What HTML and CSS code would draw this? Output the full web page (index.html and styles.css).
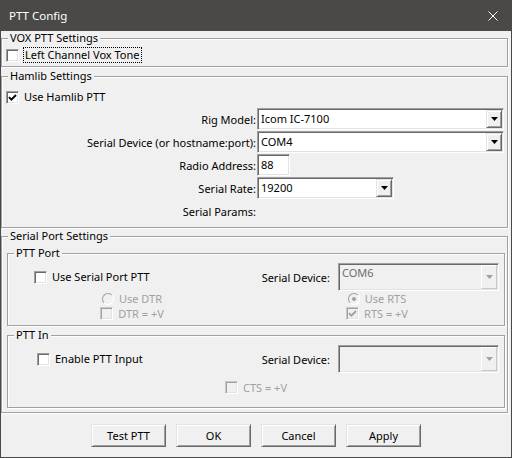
FILE: index.html
```html
<!DOCTYPE html>
<html lang="en">
<head>
    <meta charset="UTF-8">
    <title>PTT Config</title>
    <link rel="stylesheet" href="styles.css">
</head>
<body>
    <div class="window">
        <div class="titlebar">
            <span class="title">PTT Config</span>
            <svg class="close" width="10" height="10" viewBox="0 0 10 10"><path d="M0.5 0.5L9.5 9.5M9.5 0.5L0.5 9.5" stroke="#fff" stroke-width="1"/></svg>
        </div>
        <div class="client">
            <fieldset class="group vox">
                <legend>VOX PTT Settings</legend>
                <div class="check">
                    <span class="cb"></span>
                    <span class="focus">Left Channel Vox Tone</span>
                </div>
            </fieldset>

            <fieldset class="group hamlib">
                <legend>Hamlib Settings</legend>
                <div class="check">
                    <span class="cb"><svg width="9" height="9" viewBox="0 0 9 9"><path d="M1 4.2L3.4 6.6L8 2" fill="none" stroke="#000" stroke-width="1.9"/></svg></span>
                    <span>Use Hamlib PTT</span>
                </div>
                <div class="form">
                    <span class="lbl">Rig Model:</span>
                    <div class="combo w-full">
                        <span class="val">Icom IC-7100</span>
                        <span class="drop"><svg width="7" height="4" viewBox="0 0 7 4"><path d="M0 0H7L3.5 4Z" fill="#000"/></svg></span>
                    </div>
                    <span class="lbl">Serial Device (or hostname:port):</span>
                    <div class="combo w-full">
                        <span class="val">COM4</span>
                        <span class="drop"><svg width="7" height="4" viewBox="0 0 7 4"><path d="M0 0H7L3.5 4Z" fill="#000"/></svg></span>
                    </div>
                    <span class="lbl">Radio Address:</span>
                    <div class="edit w-addr">88</div>
                    <span class="lbl">Serial Rate:</span>
                    <div class="combo w-rate">
                        <span class="val">19200</span>
                        <span class="drop"><svg width="7" height="4" viewBox="0 0 7 4"><path d="M0 0H7L3.5 4Z" fill="#000"/></svg></span>
                    </div>
                    <span class="lbl">Serial Params:</span>
                    <span></span>
                </div>
            </fieldset>

            <fieldset class="group serial">
                <legend>Serial Port Settings</legend>

                <fieldset class="group sub ptt-port">
                    <legend>PTT Port</legend>
                    <div class="port-grid">
                        <div class="cell-left">
                            <div class="check"><span class="cb"></span><span>Use Serial Port PTT</span></div>
                        </div>
                        <div class="cell-right">
                            <span class="dev-lbl">Serial Device:</span>
                            <div class="combo off">
                                <span class="val">COM6</span>
                                <span class="drop"><svg width="7" height="4" viewBox="0 0 7 4"><path d="M0 0H7L3.5 4Z" fill="#a0a0a0"/></svg></span>
                            </div>
                        </div>
                        <div class="cell-mid">
                            <div class="check dim"><span class="rb"></span><span>Use DTR</span></div>
                        </div>
                        <div class="cell-mid right">
                            <div class="check dim"><span class="rb on"></span><span>Use RTS</span></div>
                        </div>
                        <div class="cell-mid">
                            <div class="check dim"><span class="cb off"></span><span>DTR = +V</span></div>
                        </div>
                        <div class="cell-mid right">
                            <div class="check dim">
                                <span class="cb off"><svg width="9" height="9" viewBox="0 0 9 9"><path d="M1 4.2L3.4 6.6L8 2" fill="none" stroke="#a0a0a0" stroke-width="1.9"/></svg></span>
                                <span>RTS = +V</span>
                            </div>
                        </div>
                    </div>
                </fieldset>

                <fieldset class="group sub ptt-in">
                    <legend>PTT In</legend>
                    <div class="port-grid in-grid">
                        <div class="cell-left">
                            <div class="check"><span class="cb"></span><span>Enable PTT Input</span></div>
                        </div>
                        <div class="cell-right">
                            <span class="dev-lbl">Serial Device:</span>
                            <div class="combo off">
                                <span class="val"></span>
                                <span class="drop"><svg width="7" height="4" viewBox="0 0 7 4"><path d="M0 0H7L3.5 4Z" fill="#a0a0a0"/></svg></span>
                            </div>
                        </div>
                        <div class="cell-span">
                            <div class="check dim"><span class="cb off"></span><span>CTS = +V</span></div>
                        </div>
                    </div>
                </fieldset>
            </fieldset>

            <div class="buttons">
                <button class="btn">Test PTT</button>
                <button class="btn">OK</button>
                <button class="btn">Cancel</button>
                <button class="btn">Apply</button>
            </div>
        </div>
    </div>
</body>
</html>
```

FILE: styles.css
```css
/* base */
body {
    margin: 0;
    font-family: 'Noto Sans', 'Segoe UI', sans-serif;
    font-size: 11px;
    color: #000;
    background: #f0f0f0;
}

.window {
    width: 512px;
    height: 458px;
    display: flex;
    flex-direction: column;
}

/* title bar */
.titlebar {
    height: 31px;
    flex: none;
    background: #4a4947;
    color: #fff;
    display: flex;
    align-items: center;
    justify-content: space-between;
    padding: 0 14px 0 9px;
    font-size: 11.5px;
}

.client {
    flex: 1;
    border: 1px solid #4a4947;
    border-top: 0;
}

/* group boxes */
.group {
    margin: 0 3px 0 0;
    padding: 0;
    border: 1px solid #a0a0a0;
    box-shadow: inset 1px 1px 0 #fff, 1px 1px 0 #fff;
    min-width: 0;
}

.group legend {
    margin-left: 6px;
    padding: 0 2px;
    line-height: 14px;
    background: #f0f0f0;
}

.vox {
    padding: 2px 0 3px;
}

.vox .check {
    margin-left: 4px;
    gap: 4px;
}

.hamlib {
    margin-top: 2px;
    padding: 6px 0 5px;
}

.hamlib > .check {
    margin-left: 4px;
}

.serial {
    margin-top: 1px;
    padding: 0 0 4px;
}

.sub {
    margin: 3px 2px 0 5px;
}

.ptt-port {
    padding: 3px 0 4px;
}

.ptt-in {
    margin-top: 2px;
    padding: 3px 0 12px;
}

/* checkbox / radio */
.check {
    display: flex;
    align-items: center;
    gap: 5px;
    height: 16px;
    line-height: 14px;
}

.cb {
    width: 13px;
    height: 13px;
    flex: none;
    box-sizing: border-box;
    border: 1px solid;
    border-color: #a0a0a0 #fff #fff #a0a0a0;
    box-shadow: inset 1px 1px 0 #696969, inset -1px -1px 0 #e3e3e3;
    background: #fff;
    display: flex;
    align-items: center;
    justify-content: center;
}

.cb.off {
    background: #f0f0f0;
    border-color: #c8c8c8 #fff #fff #c8c8c8;
    box-shadow: inset 1px 1px 0 #a0a0a0, inset -1px -1px 0 #e3e3e3;
}

.rb {
    width: 12px;
    height: 12px;
    flex: none;
    box-sizing: border-box;
    border-radius: 50%;
    border: 1px solid;
    border-color: #a0a0a0 #fff #fff #a0a0a0;
    background: #f0f0f0;
    display: flex;
    align-items: center;
    justify-content: center;
}

.rb.on::after {
    content: "";
    width: 4px;
    height: 4px;
    border-radius: 50%;
    background: #a0a0a0;
}

.focus {
    border: 1px dotted #000;
    padding: 0 1px;
}

.dim {
    color: #a0a0a0;
}

/* hamlib form */
.form {
    display: grid;
    grid-template-columns: 255px 247px;
    grid-auto-rows: 22px;
    row-gap: 1px;
    margin-top: 3px;
}

.lbl {
    align-self: center;
    text-align: right;
    padding-right: 1px;
}

.combo,
.edit {
    box-sizing: border-box;
    height: 22px;
    border: 1px solid;
    border-color: #a0a0a0 #fff #fff #a0a0a0;
    box-shadow: inset 1px 1px 0 #696969, inset -1px -1px 0 #e3e3e3;
    background: #fff;
    padding: 1px;
}

.combo {
    display: flex;
}

.combo .val {
    flex: 1;
    padding-left: 2px;
    line-height: 18px;
}

.edit {
    padding-left: 3px;
    line-height: 18px;
}

.combo .drop {
    width: 16px;
    flex: none;
    box-sizing: border-box;
    display: flex;
    align-items: center;
    justify-content: center;
    background: #f0f0f0;
    border: 1px solid;
    border-color: #e3e3e3 #696969 #696969 #e3e3e3;
    box-shadow: inset 1px 1px 0 #fff, inset -1px -1px 0 #a0a0a0;
}

.w-full { width: 247px; }
.w-addr { width: 33px; }
.w-rate { width: 137px; }

/* disabled combo */
.combo.off {
    width: 161px;
    height: 28px;
    background: #f0f0f0;
    color: #6d6d6d;
}

.combo.off .val {
    line-height: 16px;
}

.combo.off .drop {
    border-color: #fff #c8c8c8 #c8c8c8 #fff;
    box-shadow: none;
}

/* serial port grids */
.port-grid {
    display: grid;
    grid-template-columns: 1fr 1fr;
    grid-template-rows: 28px 15px 15px;
}

.in-grid {
    grid-template-rows: 28px 15px;
    row-gap: 7px;
}

.cell-left {
    display: flex;
    align-items: center;
    padding-left: 26px;
}

.in-grid .cell-left {
    padding-left: 29px;
}

.cell-right {
    display: flex;
    align-items: center;
    justify-content: flex-end;
    padding-right: 5px;
}

.dev-lbl {
    margin-right: 8px;
}

.cell-mid {
    display: flex;
    align-items: center;
    justify-content: center;
}

.cell-mid.right {
    padding-right: 6px;
}

.cell-span {
    grid-column: 1 / 3;
    display: flex;
    align-items: center;
    justify-content: center;
}

/* buttons */
.buttons {
    display: flex;
    justify-content: center;
    gap: 10px;
    margin-top: 11px;
}

.btn {
    width: 75px;
    height: 23px;
    box-sizing: border-box;
    padding: 0;
    font: inherit;
    color: #000;
    background: #f0f0f0;
    border: 1px solid;
    border-color: #e3e3e3 #696969 #696969 #e3e3e3;
    box-shadow: inset 1px 1px 0 #fff, inset -1px -1px 0 #a0a0a0;
}
```
